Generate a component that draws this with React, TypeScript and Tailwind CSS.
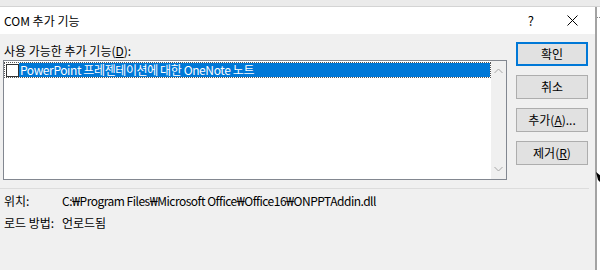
import React from 'react';

const font = "font-['Noto_Sans_CJK_KR','Noto_Sans',sans-serif]";

// the Korean font draws the won sign full-width; Windows draws it narrow
function Won() {
  return <span className="font-['Noto_Sans',sans-serif]">₩</span>;
}

function DlgButton({ children, primary }: { children: React.ReactNode; primary?: boolean }) {
  return (
    <div
      className={
        'h-[24px] w-[72px] flex items-center justify-center text-[12px] text-black bg-[#e1e1e1] ' +
        (primary ? 'border-2 border-[#0078d7]' : 'border border-[#adadad]')
      }
    >
      {children}
    </div>
  );
}

function Chevron({ up }: { up?: boolean }) {
  return (
    <svg width="9" height="6" viewBox="0 0 9 6" className="block">
      <path d={up ? 'M0.5 5 L4.5 1 L8.5 5' : 'M0.5 1 L4.5 5 L8.5 1'} fill="none" stroke="#a6a6a6" strokeWidth="1" />
    </svg>
  );
}

export default function App() {
  return (
    <div className={`w-[600px] h-[270px] bg-white relative overflow-hidden flex flex-col ${font}`}>
      {/* desktop strip above the dialog */}
      <div className="h-[7px] bg-[#ebebeb] border-b border-[#d4d4d4] shrink-0" />

      <div className="flex flex-1 min-h-0">
        <div className="w-[597px] flex flex-col border-r-2 border-[#a3a3a3] shrink-0">
          {/* title bar */}
          <div className="h-[27px] bg-white flex items-center shrink-0">
            <span className="ml-[4px] text-[12px] text-black">COM 추가 기능</span>
            <span className="ml-auto mr-[33px] text-[13px] text-black">?</span>
            <svg width="11" height="11" viewBox="0 0 11 11" className="mr-[17px]">
              <path d="M0.5 0.5 L10.5 10.5 M10.5 0.5 L0.5 10.5" stroke="#000" strokeWidth="1" />
            </svg>
          </div>

          {/* body */}
          <div className="flex-1 bg-[#f0f0f0] flex flex-col">
            <div className="flex pt-[9px]">
              <div className="ml-[3px] w-[504px] flex flex-col">
                <div className="h-[17px] leading-[17px] text-[12px] text-black pl-[1px] -mt-[1px]">
                  사용 가능한 추가 기능(<span className="underline">D</span>):
                </div>
                <div className="mt-[1px] h-[120px] border border-[#828790] bg-white flex">
                  <div className="flex-1 pt-[1px]">
                    <div className="h-[16px] flex items-center border border-dotted border-[#555]">
                      <div className="w-[13px] h-[13px] border border-[#333] bg-white ml-[1px] shrink-0" />
                      <div className="flex-1 h-full bg-[#0078d7] text-white text-[12px] leading-[14px] pl-[1px] flex items-center tracking-[-0.4px]">
                        PowerPoint 프레젠테이션에 대한 OneNote 노트
                      </div>
                    </div>
                  </div>
                  <div className="w-[15px] bg-[#f0f0f0] flex flex-col items-center justify-between py-[7px]">
                    <Chevron up />
                    <Chevron />
                  </div>
                </div>
              </div>

              <div className="ml-[9px] flex flex-col gap-[9px] -mt-[1px]">
                <DlgButton primary>확인</DlgButton>
                <DlgButton>취소</DlgButton>
                <DlgButton>
                  추가(<span className="underline">A</span>)...
                </DlgButton>
                <DlgButton>
                  제거(<span className="underline">R</span>)
                </DlgButton>
              </div>
            </div>

            <div className="mt-[8px] mr-[6px] h-px bg-[#dcdcdc]" />

            <div className="pl-[4px] pt-[1px] text-[12px] text-black flex flex-col">
              <div className="h-[22px] flex items-center">
                <span className="w-[58px]">위치:</span>
                <span className="tracking-[-0.5px]">
                  C:<Won />Program Files<Won />Microsoft Office<Won />Office16<Won />ONPPTAddin.dll
                </span>
              </div>
              <div className="h-[22px] flex items-center">
                <span className="w-[58px]">로드 방법:</span>
                <span>언로드됨</span>
              </div>
            </div>
          </div>
        </div>

        {/* strip right of the dialog */}
        <div className="flex-1 bg-white flex flex-col">
          <div className="mt-[10px] border-t border-dotted border-[#888]" />
        </div>
      </div>

      {/* mouse pointer peeking at the right edge */}
      <svg width="6" height="14" viewBox="0 0 6 14" className="absolute left-[596px] top-[172px]">
        <path d="M0 0 L6 5 L6 12 L2 8 Z" fill="#000" />
      </svg>
    </div>
  );
}
